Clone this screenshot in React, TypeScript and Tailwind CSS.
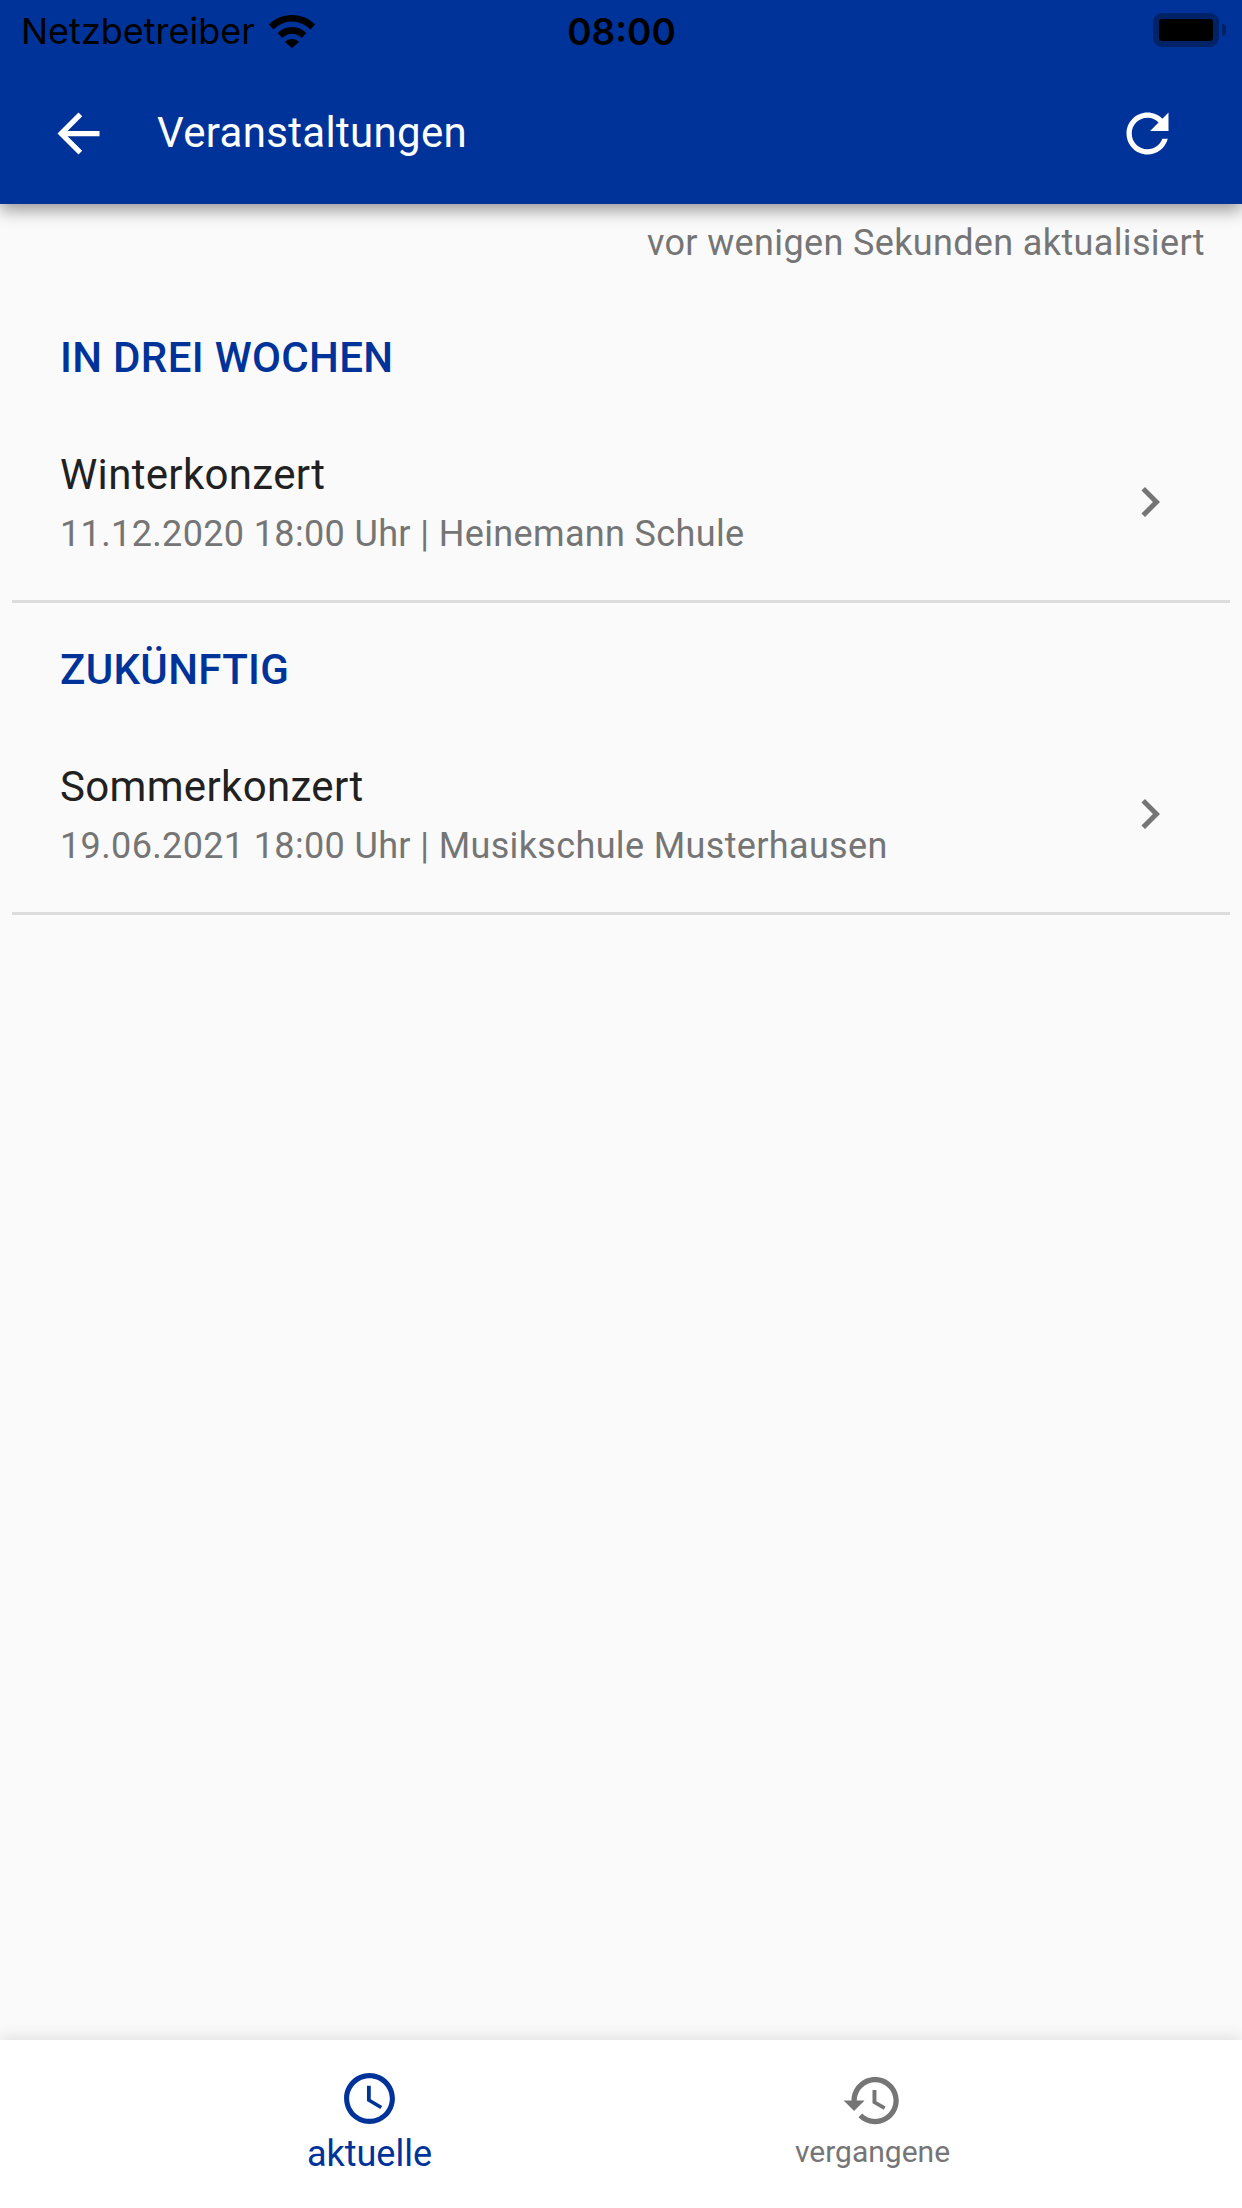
const BLUE = "text-[#003399]";

function StatusBar() {
  return (
    <div className="grid h-[62px] grid-cols-3 items-center pl-[21px] pr-4 font-['Inter',sans-serif] text-black">
      <div className="flex items-center gap-[14px]">
        <span className="text-[36px] leading-none">Netzbetreiber</span>
        <svg viewBox="0 0 46 33" className="h-[33px] w-[46px]" fill="currentColor" aria-hidden="true">
          <path d="M23 0C14 0 6 3.500 0 9.500l4.500 5C9.500 9.500 16 6.500 23 6.500s13.500 3 18.500 8l4.500-5C40 3.500 32 0 23 0z" />
          <path d="M23 12c-5.500 0-10.500 2.200-14.300 6l4.500 5c2.500-2.600 6-4.200 9.800-4.200s7.300 1.600 9.800 4.200l4.500-5C33.500 14.200 28.500 12 23 12z" />
          <path d="M23 24c-2.700 0-5.200 1-7 3l7 6 7-6c-1.800-2-4.300-3-7-3z" />
        </svg>
      </div>
      <span className="pr-[4px] text-center text-[37px] font-semibold leading-none">08:00</span>
      <div className="flex items-center justify-end gap-[3px] pb-[2px]">
        <div className="flex h-[34px] w-[66px] rounded-[9px] border-[6px] border-[#002266]">
          <div className="flex-1 rounded-[3px] bg-black" />
        </div>
        <div className="h-[12px] w-[4px] rounded-r-full bg-[#002266]" />
      </div>
    </div>
  );
}

function Toolbar() {
  return (
    <div className="flex h-[142px] items-center pl-[47px] pr-[63px] text-white">
      <svg viewBox="0 0 24 24" className="h-[63px] w-[63px]" fill="currentColor" aria-hidden="true">
        <path d="M20 11H7.830l5.590-5.590L12 4l-8 8 8 8 1.410-1.410L7.830 13H20v-2z" />
      </svg>
      <h1 className="ml-[47px] flex-1 text-[42px] leading-none tracking-[0.33px]">Veranstaltungen</h1>
      <svg viewBox="0 0 24 24" className="h-[63px] w-[63px]" fill="currentColor" aria-hidden="true">
        <path d="M17.650 6.350C16.200 4.900 14.210 4 12 4c-4.420 0-7.990 3.580-7.990 8s3.570 8 7.990 8c3.730 0 6.840-2.550 7.730-6h-2.080c-.82 2.330-3.040 4-5.650 4-3.310 0-6-2.690-6-6s2.690-6 6-6c1.660 0 3.140.69 4.220 1.780L13 11h7V4l-2.350 2.350z" />
      </svg>
    </div>
  );
}

type Event = { title: string; details: string };

function EventSection({ heading, event }: { heading: string; event: Event }) {
  return (
    <section className="mx-3 border-b-[3px] border-[#dcdcdc]">
      <h2 className={`flex h-[133px] items-center pl-[48px] text-[42px] font-medium leading-none tracking-[0.33px] ${BLUE}`}>
        {heading}
      </h2>
      <div className="flex h-[176px] items-center justify-between pb-[20px] pl-[48px] pr-[50px]">
        <div className="mt-[4px]">
          <div className="text-[42px] leading-[60px] tracking-[0.33px] text-[#212121]">{event.title}</div>
          <div className="text-[36px] leading-[59px] tracking-[0.36px] text-[#757575]">{event.details}</div>
        </div>
        <svg viewBox="0 0 24 24" className="h-[60px] w-[60px] text-[#757575]" fill="currentColor" aria-hidden="true">
          <path d="M10 6L8.590 7.410 13.170 12l-4.580 4.590L10 18l6-6z" />
        </svg>
      </div>
    </section>
  );
}

function BottomTabs() {
  return (
    <nav className="relative z-10 grid h-[168px] grid-cols-2 bg-white px-[118px] shadow-[0_-2px_16px_rgba(0,0,0,0.12)]">
      <button type="button" className={`flex flex-col items-center pt-[28px] ${BLUE}`}>
        <svg viewBox="0 0 24 24" className="h-[61px] w-[61px]" fill="currentColor" aria-hidden="true">
          <path d="M11.990 2C6.470 2 2 6.480 2 12s4.470 10 9.990 10C17.520 22 22 17.520 22 12S17.520 2 11.990 2zM12 20c-4.420 0-8-3.580-8-8s3.580-8 8-8 8 3.580 8 8-3.580 8-8 8zm.5-13H11v6l5.250 3.150.75-1.230-4.500-2.670z" />
        </svg>
        <span className="mt-[3px] text-[36px] leading-[44px]">aktuelle</span>
      </button>
      <button type="button" className="flex flex-col items-center pt-[29px] text-[#757575]">
        <svg viewBox="0 0 24 24" className="h-[63px] w-[63px]" fill="currentColor" aria-hidden="true">
          <path d="M13 3c-4.970 0-9 4.030-9 9H1l3.890 3.890.07.14L9 12H6c0-3.870 3.130-7 7-7s7 3.130 7 7-3.130 7-7 7c-1.930 0-3.680-.79-4.940-2.060l-1.420 1.420C8.270 19.990 10.510 21 13 21c4.970 0 9-4.030 9-9s-4.030-9-9-9zm-1 5v5l4.280 2.540.72-1.210-3.500-2.080V8H12z" />
        </svg>
        <span className="mt-[1px] text-[30px] leading-[38px]">vergangene</span>
      </button>
    </nav>
  );
}

export default function App() {
  return (
    <div className="flex h-[2208px] w-[1242px] flex-col overflow-hidden bg-[#fafafa] font-['Roboto',sans-serif]">
      <header className="relative z-10 shrink-0 bg-[#003399] shadow-[0_6px_16px_rgba(0,0,0,0.4)]">
        <StatusBar />
        <Toolbar />
      </header>

      <main className="flex-1">
        <p className="flex h-[87px] items-center justify-end pb-[9px] pr-[37px] text-[36px] leading-none tracking-[0.36px] text-[#757575]">
          vor wenigen Sekunden aktualisiert
        </p>
        <EventSection
          heading="IN DREI WOCHEN"
          event={{ title: "Winterkonzert", details: "11.12.2020 18:00 Uhr | Heinemann Schule" }}
        />
        <EventSection
          heading="ZUKÜNFTIG"
          event={{ title: "Sommerkonzert", details: "19.06.2021 18:00 Uhr | Musikschule Musterhausen" }}
        />
      </main>

      <BottomTabs />
    </div>
  );
}
